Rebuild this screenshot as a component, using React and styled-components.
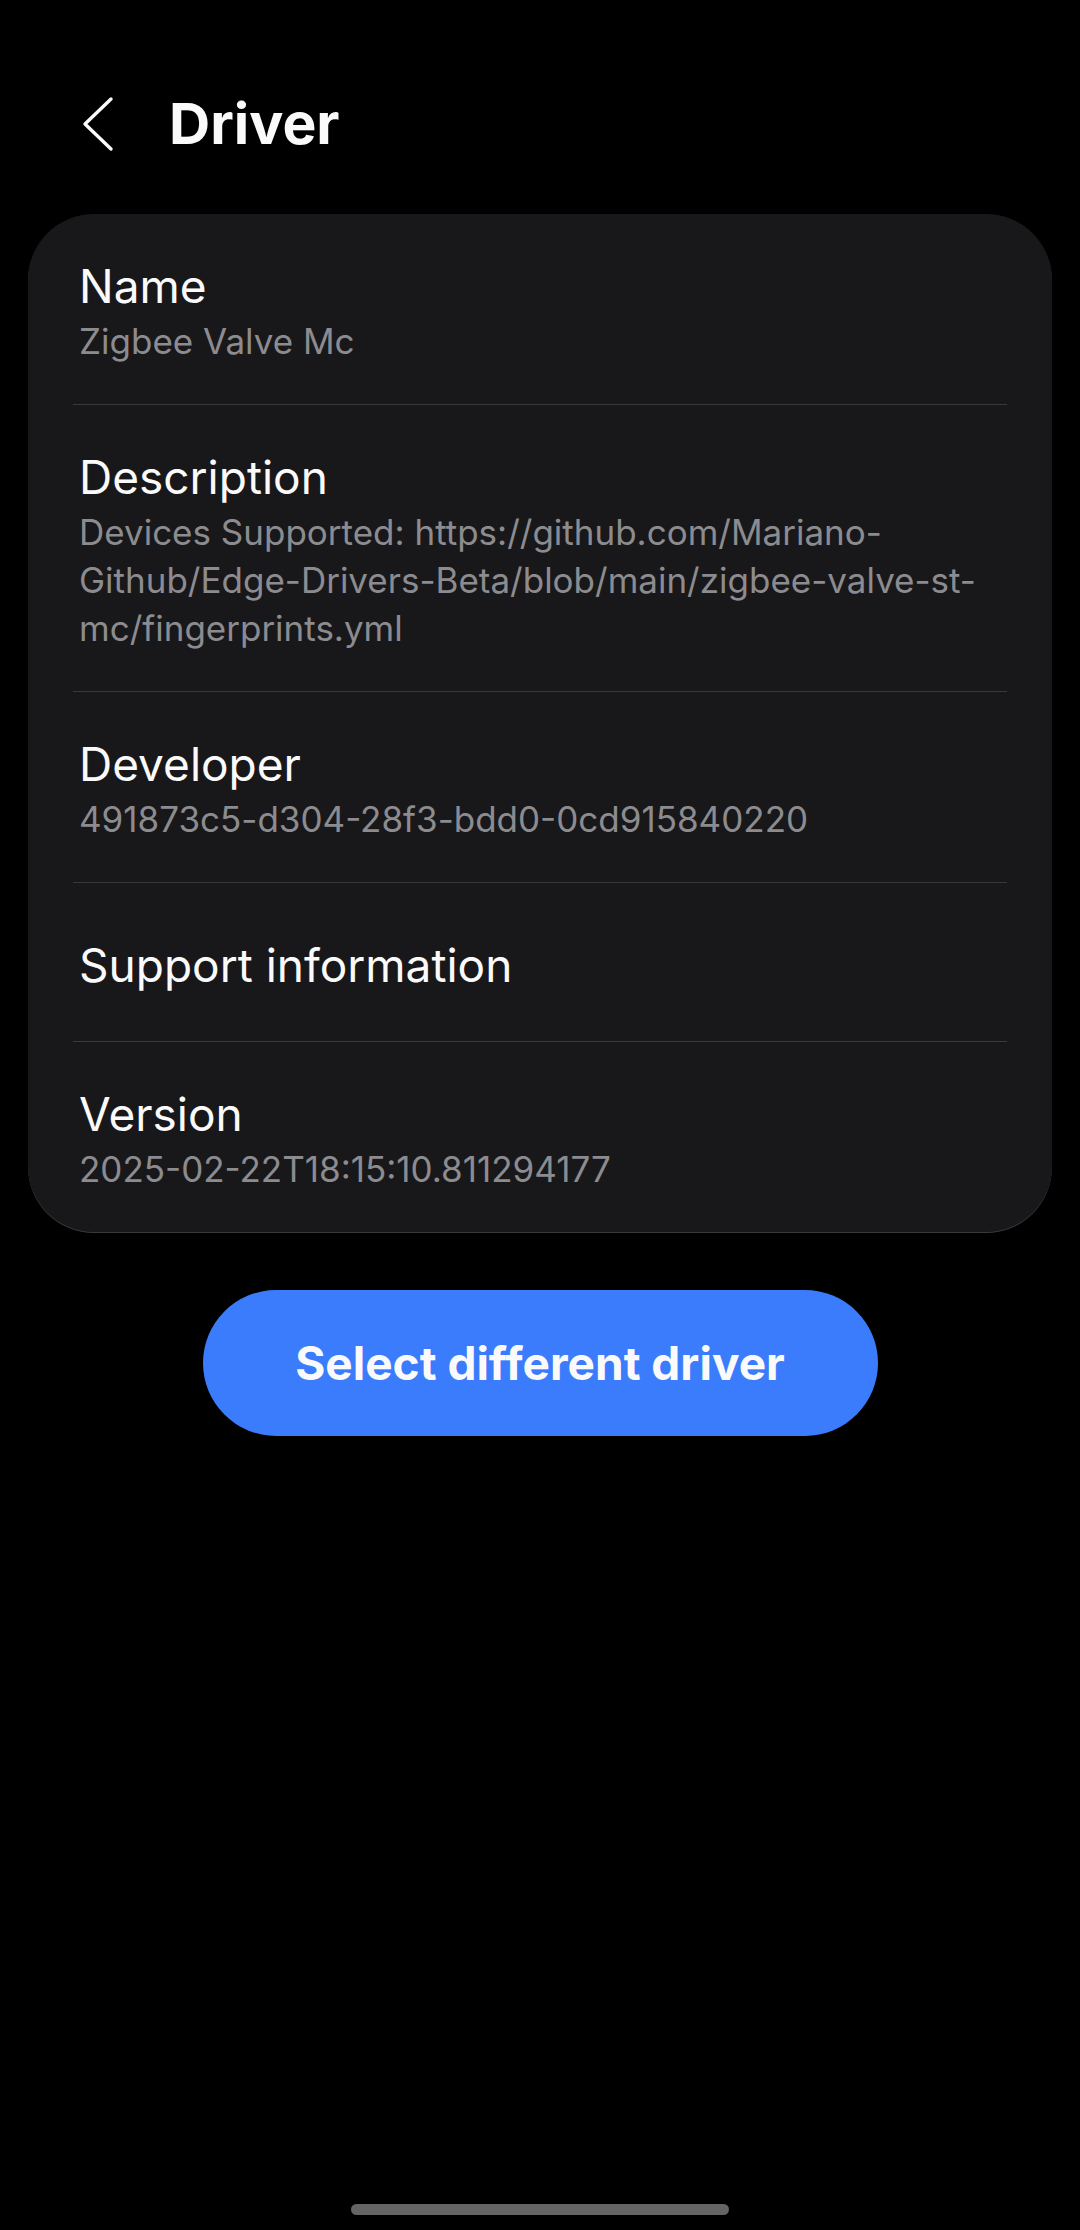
import React from 'react'
import styled, { createGlobalStyle } from 'styled-components'

const GlobalStyle = createGlobalStyle`
    html, body {
        margin: 0;
        padding: 0;
        background: #000;
    }
    body {
        font-family: Inter, "Noto Sans", Roboto, sans-serif;
        color: #fafafa;
    }
`

const fields = [
    { label: 'Name', value: ['Zigbee Valve Mc'] },
    {
        label: 'Description',
        value: [
            'Devices Supported: https://github.com/Mariano-',
            'Github/Edge-Drivers-Beta/blob/main/zigbee-valve-st-',
            'mc/fingerprints.yml',
        ],
    },
    { label: 'Developer', value: ['491873c5-d304-28f3-bdd0-0cd915840220'] },
    { label: 'Support information' },
    { label: 'Version', value: ['2025-02-22T18:15:10.811294177'] },
]

function App() {
    return (
        <Page>
            <GlobalStyle />
            <Header>
                <BackButton aria-label="Back">
                    <svg width="36" height="60" viewBox="0 0 36 60" fill="none">
                        <path
                            d="M31 5 L5 30 L31 55"
                            stroke="#fafafa"
                            strokeWidth="3.4"
                            strokeLinecap="round"
                            strokeLinejoin="round"
                        />
                    </svg>
                </BackButton>
                <Title>Driver</Title>
            </Header>

            <Card>
                {fields.map((field, index) => (
                    <Row key={index} single={!field.value}>
                        <Label>{field.label}</Label>
                        {field.value && (
                            <Value>
                                {field.value.map((line, i) => (
                                    <React.Fragment key={i}>
                                        {i > 0 && <br />}
                                        {line}
                                    </React.Fragment>
                                ))}
                            </Value>
                        )}
                    </Row>
                ))}
            </Card>

            <ButtonWrap>
                <PrimaryButton>Select different driver</PrimaryButton>
            </ButtonWrap>

            <HomeBar />
        </Page>
    )
}

export default App

const Page = styled.div`
    min-height: 2230px;
    display: flex;
    flex-direction: column;
    background: #000;
`

const Header = styled.div`
    display: flex;
    align-items: center;
    height: 60px;
    padding: 94px 0 0 80px;
    gap: 53px;
`

const BackButton = styled.div`
    display: flex;
    width: 36px;
    height: 60px;
`

const Title = styled.h1`
    margin: 0;
    font-size: 57px;
    line-height: 60px;
    font-weight: 700;
    color: #fafafa;
`

const Card = styled.div`
    margin: 60px 28px 0;
    padding: 0 45px;
    background: #18181a;
    border-radius: 66px;
    box-shadow: 0 1px 0 #3a3a3e;
`

const Row = styled.div`
    padding: ${props => props.single ? '54px 6px 48px' : '44px 6px 39px'};
    & + & {
        border-top: 1px solid #38383b;
    }
`

const Label = styled.div`
    font-size: 46px;
    line-height: 56px;
    font-weight: 400;
    color: #fafafa;
`

const Value = styled.div`
    margin-top: 3px;
    font-size: 35px;
    line-height: 48px;
    color: #8c8c90;
    white-space: nowrap;
`

const ButtonWrap = styled.div`
    display: flex;
    justify-content: center;
    margin-top: 58px;
`

const PrimaryButton = styled.button`
    width: 675px;
    height: 146px;
    border: none;
    border-radius: 73px;
    background: #3b7cfc;
    color: #fafafa;
    font-family: Inter, "Noto Sans", sans-serif;
    font-size: 46px;
    font-weight: 700;
    cursor: pointer;
`

const HomeBar = styled.div`
    margin: auto auto 15px;
    width: 378px;
    height: 11px;
    border-radius: 6px;
    background: #646464;
`
